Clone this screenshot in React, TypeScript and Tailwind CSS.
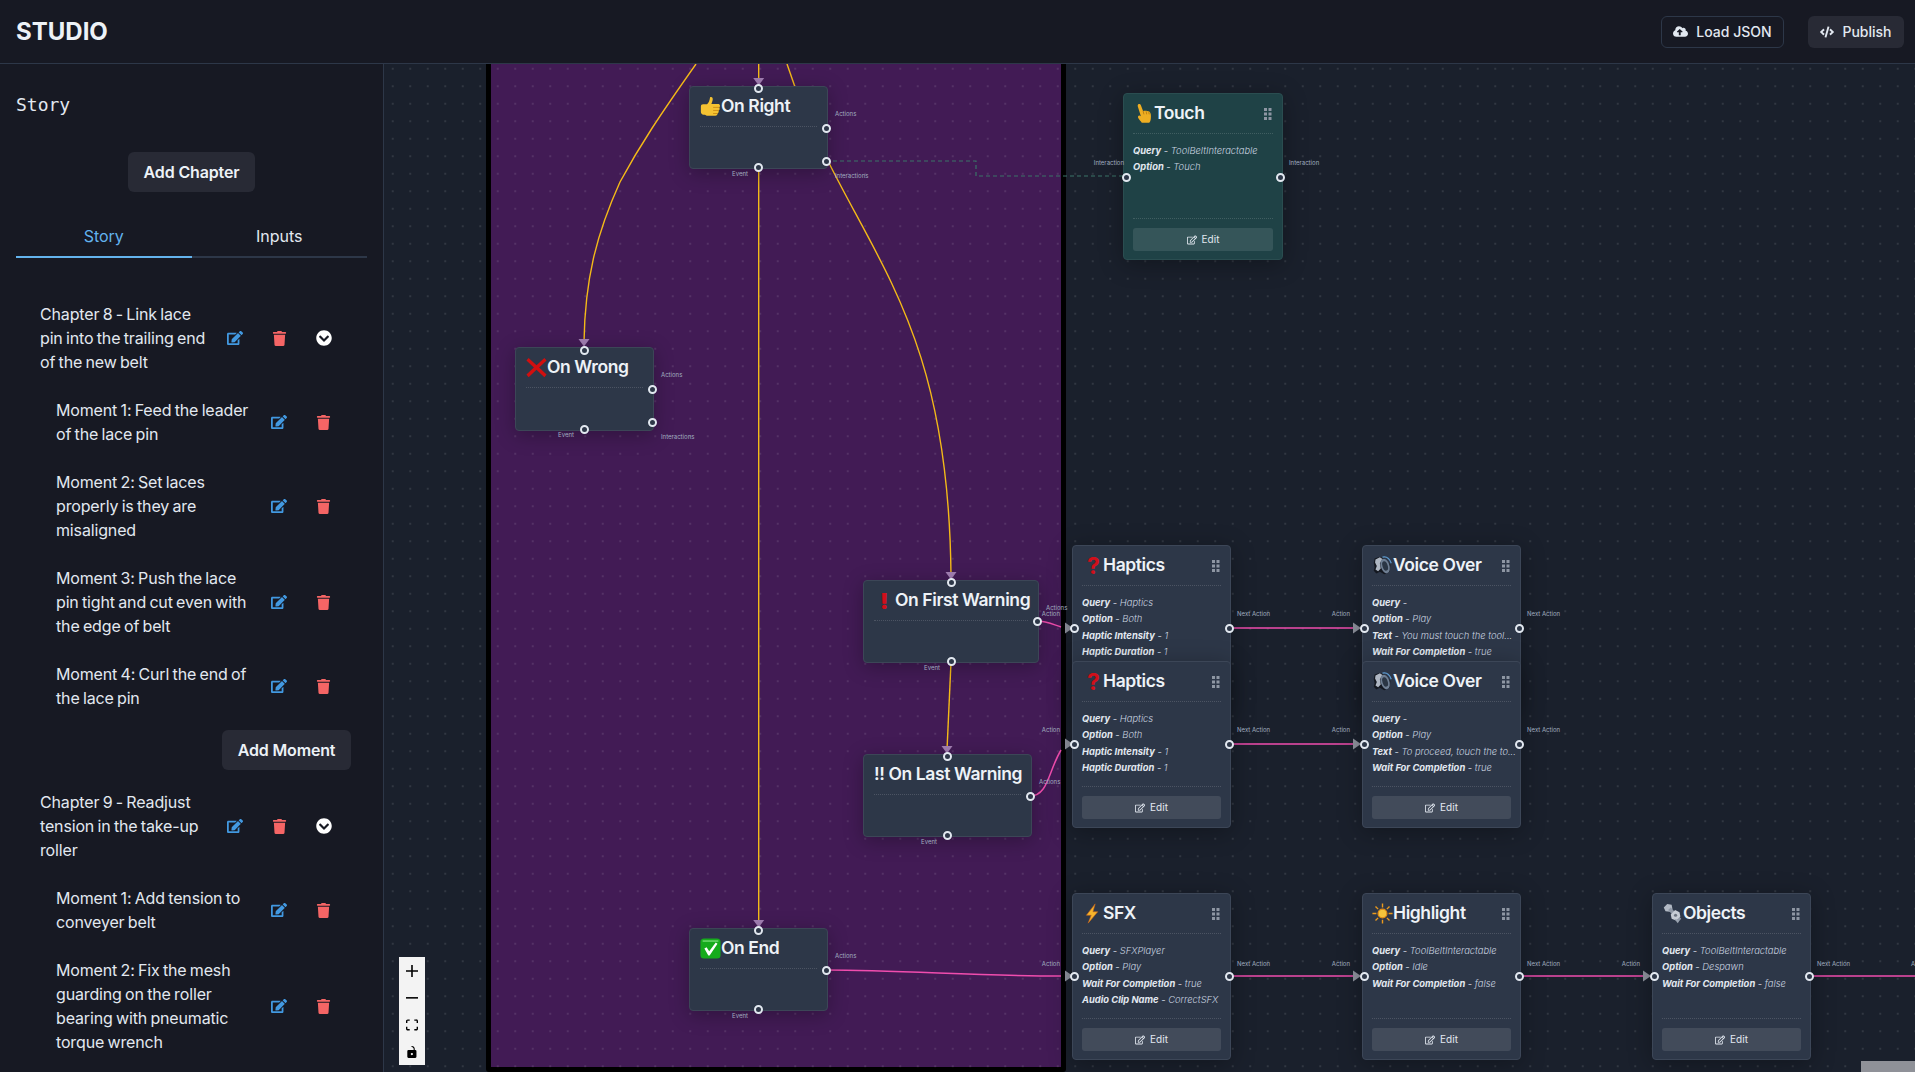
import { FaChevronCircleDown, FaCloudUploadAlt, FaCode, FaEdit, FaRegEdit, FaTrash } from 'react-icons/fa';

const X0 = 384;
const Y0 = 64;

const chapters = [
  {
    title: 'Chapter 8 - Link lace pin into the trailing end of the new belt',
    moments: [
      'Moment 1: Feed the leader of the lace pin',
      'Moment 2: Set laces properly is they are misaligned',
      'Moment 3: Push the lace pin tight and cut even with the edge of belt',
      'Moment 4: Curl the end of the lace pin',
    ],
    addMoment: true,
  },
  {
    title: 'Chapter 9 - Readjust tension in the take-up roller',
    moments: [
      'Moment 1: Add tension to conveyer belt',
      'Moment 2: Fix the mesh guarding on the roller bearing with pneumatic torque wrench',
    ],
    addMoment: false,
  },
];

function Thumb() {
  return (
    <svg viewBox="0 0 24 24" className="h-[21px] w-[21px] shrink-0">
      <path d="M1 12c0-1.500 1-2.500 2.500-2.500H8c2-2 3-4 3.500-8 2-1 3.500.5 3 3-.3 1.700-1 3-1.500 4.500h8c2 0 2.500 3 1 4 1 1.500.5 3-.8 3.500.5 1.500 0 3-1.200 3.300.2 1.700-.8 2.700-2.500 2.700H9c-1.500 0-2.500-.7-3.500-1.200H4c-1.800 0-3-1.300-3-3z" fill="#f5c332" />
      <path d="M15 13h7M15 16.500h6.500M15 20h5" stroke="#c98a12" strokeWidth="1" />
    </svg>
  );
}

function Cross() {
  return (
    <svg viewBox="0 0 24 24" className="h-[21px] w-[21px] shrink-0">
      <path d="M3 1l9 8.500L21 1l2.500 3-8.500 8 8.500 8-2.500 3-9-8.500L3 23 .5 20 9 12 .5 4z" fill="#d10f0f" />
    </svg>
  );
}

function Point() {
  return (
    <svg viewBox="0 0 24 24" className="h-[21px] w-[21px] shrink-0">
      <path d="M6 1.500c1.200-.8 2.500-.3 3 1l2.500 6.500c2-.5 5-.3 6.500.5 2 1 2.500 3 2.500 5.500 0 3.500-.5 6-2 7.500H10c-1-2-3-3.500-4-5.500-.8-1.500.2-3 2-2.500L9 15 5.500 4c-.3-1 0-2 .5-2.500z" fill="#eeae22" />
      <path d="M11.500 9l1 4M15 9.500l.7 3.500M18 10l.5 3" stroke="#b87a10" strokeWidth="1" />
    </svg>
  );
}

function Speaker() {
  return (
    <svg viewBox="0 0 24 24" className="h-[21px] w-[21px] shrink-0">
      <path d="M3 4l6-2 5 2 7 7-1 8-6 3-5-3-4 2-3-3 1-4-1-5z" fill="#141820" />
      <path d="M4 5l5-2.500 3 2-3 5 1 6-3 3-3-2 1.500-4-2-4z" fill="#aeb6c2" />
      <ellipse cx="15" cy="12.500" rx="5" ry="8.500" transform="rotate(-18 15 12.500)" fill="#6f7f93" />
      <ellipse cx="15" cy="12.500" rx="3" ry="5.500" transform="rotate(-18 15 12.500)" fill="#2b3644" />
      <path d="M12 2.500c4-1 8 1.500 10 7" stroke="#5d9bd0" strokeWidth="1.400" fill="none" />
    </svg>
  );
}

function Bolt() {
  return (
    <svg viewBox="0 0 24 24" className="h-[21px] w-[21px] shrink-0">
      <path d="M15 1L5 14h5.500L7 23l11-13h-5.500z" fill="#f6b52c" stroke="#c9651a" strokeWidth="0.700" />
    </svg>
  );
}

function Sun() {
  return (
    <svg viewBox="0 0 24 24" className="h-[21px] w-[21px] shrink-0">
      <circle cx="12" cy="12" r="5" fill="#f4c53c" stroke="#e28c17" strokeWidth="1.500" />
      <path d="M12 .5v4.500M12 19v4.500M.5 12H5M19 12h4.500M4 4l3 3M17 17l3 3M4 20l3-3M17 7l3-3" stroke="#ec9a1d" strokeWidth="1.600" />
    </svg>
  );
}

function NutBolt() {
  return (
    <svg viewBox="0 0 24 24" className="h-[21px] w-[21px] shrink-0">
      <path d="M2 5l4-4 5 1 1 5-3 3-5-.5z" fill="#b3bac5" />
      <path d="M7 8l3-3 12 13-3 3z" fill="#8f98a6" />
      <path d="M10 13l5-5 5 2.500 1 5-5 4.500-5-2z" fill="#c6ccd5" />
      <path d="M14 18l6 2-2 3z" fill="#9aa3b0" />
      <circle cx="15.500" cy="14" r="1.800" fill="#6b7380" />
    </svg>
  );
}

function Check() {
  return (
    <svg viewBox="0 0 24 24" className="h-[21px] w-[21px] shrink-0">
      <rect x="0.500" y="0.500" width="23" height="23" rx="4" fill="#16ab1c" />
      <path d="M3 2.500h18v2H3z" fill="#62d163" />
      <path d="M5 12l2.500-1.500 3 4.500L18 5l2 1.500L11 20h-1.500z" fill="#fff" />
    </svg>
  );
}

function Question() {
  return <span className="w-[21px] shrink-0 pl-[5px] text-[23px] leading-5 font-bold text-[#d10f1a]">?</span>;
}

function Bang() {
  return <span className="w-[21px] shrink-0 pl-[6px] text-[22px] leading-5 font-black text-[#d10f1a]">!</span>;
}

function Grip() {
  return (
    <svg viewBox="0 0 8 12" className="absolute right-[10px] top-[14px] h-3 w-2">
      {[0, 4.500, 9].map((y) => (
        <g key={y} fill="#8e96a3">
          <rect x="0" y={y} width="3" height="3" />
          <rect x="4.500" y={y} width="3" height="3" />
        </g>
      ))}
    </svg>
  );
}

function Handle({ x, y }: { x: number; y: number }) {
  return (
    <div
      className="absolute z-20 h-[9px] w-[9px] rounded-full border-2 border-[#e2e8f0] bg-[#2d3748]"
      style={{ left: x - X0 - 4.5, top: y - Y0 - 4.5 }}
    />
  );
}

function Label({ text, x, y, align = 'left' }: { text: string; x: number; y: number; align?: 'left' | 'right' | 'center' }) {
  const shift = align === 'left' ? '0' : align === 'right' ? '-100%' : '-50%';
  return (
    <span
      className="absolute z-20 text-[6px] leading-[8px] whitespace-nowrap text-[#a0aec0]"
      style={{ left: x - X0, top: y - Y0 - 4, transform: `translateX(${shift})` }}
    >
      {text}
    </span>
  );
}

function EventNode({ x, y, w, h, icon, title }: { x: number; y: number; w: number; h: number; icon?: React.ReactNode; title: string }) {
  return (
    <div
      className="absolute z-10 rounded-[4px] border border-[#3c4657] bg-[#2d3748] px-[10px] shadow-[0_4px_20px_rgba(0,0,0,0.28)]"
      style={{ left: x - X0, top: y - Y0, width: w, height: h }}
    >
      <div className="flex h-[39px] items-center whitespace-nowrap text-[17.500px] font-semibold tracking-[-0.4px] text-[#edf2f7]">
        {icon}
        {title}
      </div>
      <div className="border-t border-dotted border-white/15" />
    </div>
  );
}

function ActionNode({
  x,
  y,
  icon,
  title,
  props,
  touch,
}: {
  x: number;
  y: number;
  icon: React.ReactNode;
  title: string;
  props: [string, string][];
  touch?: boolean;
}) {
  return (
    <div
      className={`absolute z-10 flex h-[167px] flex-col rounded-[4px] border px-[9px] shadow-[0_4px_24px_rgba(0,0,0,0.3)] ${
        touch ? 'w-[160px] border-[#2a4d50] bg-[#1f4246]' : 'w-[159px] border-[#3c4657] bg-[#2d3748]'
      }`}
      style={{ left: x - X0, top: y - Y0 }}
    >
      <Grip />
      <div className="flex h-[39px] shrink-0 items-center whitespace-nowrap text-[17.500px] font-semibold tracking-[-0.4px] text-[#edf2f7]">
        {icon}
        {title}
      </div>
      <div className="border-t border-dotted border-white/15" />
      <div className="h-[84px] shrink-0 pt-[9px] text-[9.400px] leading-[16.300px] italic text-[#cbd5e0]">
        {props.map(([k, v]) => (
          <div key={k} className="whitespace-nowrap">
            <b className="font-bold text-[#e2e8f0]">{k}</b> - <span className="font-light">{v}</span>
          </div>
        ))}
      </div>
      <div className="border-t border-dotted border-white/15" />
      <button className="mt-[9px] flex h-[23px] shrink-0 items-center justify-center gap-[5px] rounded-[3px] bg-white/10 text-[10px] text-[#e2e8f0]">
        <FaRegEdit className="text-[10px]" />
        Edit
      </button>
    </div>
  );
}

function Canvas() {
  const p = (x: number, y: number) => `${x - X0} ${y - Y0}`;
  const yellow = '#f4ba18';
  const pink = '#f04dae';
  return (
    <main className="relative h-full flex-1 overflow-hidden bg-[#1a202c]">
      {/* group */}
      <div className="absolute left-[102px] top-[-20px] h-[1028px] w-[580px] rounded-[3px] border-[5px] border-black bg-[#421b55]" />
      <div className="absolute inset-0 bg-[radial-gradient(circle,rgba(255,255,255,0.1)_0.7px,transparent_0.8px)] bg-[length:17.5px_17.5px] bg-[position:0px_-4px]" />

      {/* edges */}
      <svg className="absolute inset-0 h-full w-full" fill="none">
        <g stroke={yellow} strokeWidth="1.400">
          <path d={`M${p(758.7, 64)}V${84 - Y0}`} />
          <path d={`M${p(696, 64)}C${p(660, 115)} ${p(640, 145)} ${p(620, 182)}C${p(596, 235)} ${p(585, 280)} ${p(584, 342)}`} />
          <path d={`M${p(787, 64)}L${p(795, 87)}`} />
          <path d={`M${p(829, 163)}C${p(885, 275)} ${p(949, 350)} ${p(951, 576)}`} />
          <path d={`M${p(758.7, 168)}V${924 - Y0}`} />
          <path d={`M${p(951, 662)}L${p(947, 750)}`} />
        </g>
        <g stroke={pink} strokeWidth="1.500">
          <path d={`M${p(1037, 621)}C${p(1046, 621)} ${p(1052, 624)} ${p(1061, 627)}`} />
          <path d={`M${p(1030, 796)}C${p(1048, 796)} ${p(1048, 772)} ${p(1061, 750)}`} />
          <path d={`M${p(826, 970)}C${p(900, 970)} ${p(980, 976)} ${p(1061, 976)}`} />
          <path d={`M${p(1229, 628)}H${1356 - X0}`} />
          <path d={`M${p(1229, 744)}H${1356 - X0}`} />
          <path d={`M${p(1229, 976)}H${1356 - X0}`} />
          <path d={`M${p(1519, 976)}H${1646 - X0}`} />
          <path d={`M${p(1809, 976)}H${1915 - X0}`} />
        </g>
        <path d={`M${p(826, 161)}H${976 - X0}V${176 - Y0}H${1125 - X0}`} stroke="#3a7468" strokeWidth="1.200" strokeDasharray="4 3" />
        <g fill="#a37fb4">
          {[
            [758.7, 78],
            [584, 339],
            [951, 572],
            [947, 746],
            [758.7, 920],
          ].map(([x, y]) => (
            <path key={x + '-' + y} d={`M${p(x - 5.5, y)}H${x + 5.5 - X0}L${p(x, y + 7.5)}Z`} />
          ))}
        </g>
        <g fill="#8f939e">
          {[
            [1065, 628],
            [1353, 628],
            [1065, 744],
            [1353, 744],
            [1065, 976],
            [1353, 976],
            [1643, 976],
          ].map(([x, y]) => (
            <path key={x + '-' + y} d={`M${p(x, y - 5.5)}L${p(x + 8, y)}L${p(x, y + 5.5)}Z`} />
          ))}
        </g>
      </svg>

      {/* story nodes */}
      <EventNode x={689} y={86} w={139} h={83} icon={<Thumb />} title="On Right" />
      <EventNode x={515} y={347} w={139} h={84} icon={<Cross />} title="On Wrong" />
      <EventNode x={863} y={580} w={176} h={83} icon={<Bang />} title="On First Warning" />
      <EventNode x={863} y={754} w={169} h={83} title="!! On Last Warning" />
      <EventNode x={689} y={928} w={139} h={83} icon={<Check />} title="On End" />

      <ActionNode x={1123} y={93} touch icon={<Point />} title="Touch" props={[['Query', 'ToolBeltInteractable'], ['Option', 'Touch']]} />
      <ActionNode
        x={1072}
        y={545}
        icon={<Question />}
        title="Haptics"
        props={[['Query', 'Haptics'], ['Option', 'Both'], ['Haptic Intensity', '1'], ['Haptic Duration', '1']]}
      />
      <ActionNode
        x={1362}
        y={545}
        icon={<Speaker />}
        title="Voice Over"
        props={[['Query', ''], ['Option', 'Play'], ['Text', 'You must touch the tool...'], ['Wait For Completion', 'true']]}
      />
      <ActionNode
        x={1072}
        y={661}
        icon={<Question />}
        title="Haptics"
        props={[['Query', 'Haptics'], ['Option', 'Both'], ['Haptic Intensity', '1'], ['Haptic Duration', '1']]}
      />
      <ActionNode
        x={1362}
        y={661}
        icon={<Speaker />}
        title="Voice Over"
        props={[['Query', ''], ['Option', 'Play'], ['Text', 'To proceed, touch the to...'], ['Wait For Completion', 'true']]}
      />
      <ActionNode
        x={1072}
        y={893}
        icon={<Bolt />}
        title="SFX"
        props={[['Query', 'SFXPlayer'], ['Option', 'Play'], ['Wait For Completion', 'true'], ['Audio Clip Name', 'CorrectSFX']]}
      />
      <ActionNode
        x={1362}
        y={893}
        icon={<Sun />}
        title="Highlight"
        props={[['Query', 'ToolBeltInteractable'], ['Option', 'Idle'], ['Wait For Completion', 'false']]}
      />
      <ActionNode
        x={1652}
        y={893}
        icon={<NutBolt />}
        title="Objects"
        props={[['Query', 'ToolBeltInteractable'], ['Option', 'Despawn'], ['Wait For Completion', 'false']]}
      />

      {/* handles */}
      {[
        [758.7, 88], [826, 128], [826, 161], [758.7, 167.500],
        [584, 350], [652, 389], [652, 422], [584, 429],
        [951, 582], [1037, 621], [951, 661],
        [947, 756], [1030, 796], [947, 835],
        [758.7, 930], [826, 970], [758.7, 1009],
        [1126, 177], [1280, 177],
        [1074, 628], [1229, 628], [1364, 628], [1519, 628],
        [1074, 744], [1229, 744], [1364, 744], [1519, 744],
        [1074, 976], [1229, 976], [1364, 976], [1519, 976], [1654, 976], [1809, 976],
      ].map(([x, y]) => (
        <Handle key={x + '-' + y} x={x} y={y} />
      ))}

      {/* handle labels */}
      <Label text="Actions" x={835} y={114} />
      <Label text="Interactions" x={835} y={176} />
      <Label text="Event" x={740} y={174} align="center" />
      <Label text="Actions" x={661} y={375} />
      <Label text="Interactions" x={661} y={437} />
      <Label text="Event" x={566} y={435} align="center" />
      <Label text="Actions" x={1046} y={608} />
      <Label text="Event" x={932} y={668} align="center" />
      <Label text="Actions" x={1039} y={782} />
      <Label text="Event" x={929} y={842} align="center" />
      <Label text="Actions" x={835} y={956} />
      <Label text="Event" x={740} y={1016} align="center" />
      <Label text="Interaction" x={1124} y={163} align="right" />
      <Label text="Interaction" x={1289} y={163} />
      {[614, 730, 964].map((y) => (
        <Label key={y} text="Action" x={1060} y={y} align="right" />
      ))}
      {[614, 730, 964].map((y) => (
        <Label key={y} text="Next Action" x={1237} y={y} />
      ))}
      {[614, 730, 964].map((y) => (
        <Label key={y} text="Action" x={1350} y={y} align="right" />
      ))}
      {[614, 730, 964].map((y) => (
        <Label key={y} text="Next Action" x={1527} y={y} />
      ))}
      <Label text="Action" x={1640} y={964} align="right" />
      <Label text="Next Action" x={1817} y={964} />
      <Label text="Action" x={1911} y={964} />

      {/* zoom controls */}
      <div className="absolute bottom-[7px] left-[15px] z-30 flex w-[26px] flex-col bg-[#f3f3f3]">
        <button className="flex h-[27px] items-center justify-center">
          <svg viewBox="0 0 32 32" className="h-3 w-3"><path d="M32 18.133H18.133V32h-4.266V18.133H0v-4.266h13.867V0h4.266v13.867H32z" /></svg>
        </button>
        <button className="flex h-[27px] items-center justify-center">
          <svg viewBox="0 0 32 5" className="h-[2px] w-3"><path d="M0 0h32v4.200H0z" /></svg>
        </button>
        <button className="flex h-[27px] items-center justify-center">
          <svg viewBox="0 0 32 30" className="h-3 w-3"><path d="M3.692 4.630c0-.530.400-.938.939-.938h5.215V0H4.708C2.130 0 0 2.054 0 4.630v5.216h3.692V4.631zM27.354 0h-5.200v3.692h5.170c.530 0 .984.400.984.939v5.215H32V4.631A4.624 4.624 0 0027.354 0zm.954 24.830c0 .532-.400.940-.939.940h-5.215v3.768h5.215c2.577 0 4.631-2.130 4.631-4.707v-5.139h-3.692v5.139zm-23.677.940c-.531 0-.939-.400-.939-.940v-5.138H0v5.139c0 2.577 2.130 4.707 4.708 4.707h5.138V25.770H4.631z" /></svg>
        </button>
        <button className="flex h-[27px] items-center justify-center">
          <svg viewBox="0 0 25 32" className="h-3 w-3"><path d="M21.333 10.667H19.810V7.619C19.810 3.429 16.380 0 12.190 0c-4.114 1.828-1.370 2.133.305 2.438 1.676.305 4.420 2.590 4.420 5.181v3.048H3.047A3.056 3.056 0 000 13.714v15.238A3.056 3.056 0 003.048 32h18.285a3.056 3.056 0 003.048-3.048V13.714a3.056 3.056 0 00-3.048-3.047zM12.190 24.533a3.056 3.056 0 01-3.047-3.047 3.056 3.056 0 013.047-3.048 3.056 3.056 0 013.048 3.048 3.056 3.056 0 01-3.048 3.047z" /></svg>
        </button>
      </div>

      {/* minimap corner */}
      <div className="absolute bottom-0 right-0 z-30 h-[11px] w-[54px] bg-[#8f9198]" />
    </main>
  );
}

function IconCell({ children }: { children: React.ReactNode }) {
  return <div className="flex w-[44.500px] shrink-0 justify-center">{children}</div>;
}

function Sidebar() {
  return (
    <aside className="h-full w-[384px] shrink-0 overflow-hidden border-r border-[#2d3748] bg-[#171923] px-4">
      <h2 className="mt-[29px] font-['DejaVu_Sans_Mono',monospace] text-[18px] leading-6 text-[#e2e8f0]">Story</h2>
      <div className="mt-[35px] flex justify-center">
        <button className="h-10 w-[127px] rounded-md bg-[#282a35] text-base font-semibold tracking-[-0.15px] text-[#edf2f7]">Add Chapter</button>
      </div>

      <div className="mt-6 flex h-[42px] border-b-2 border-[#2d3748]">
        <div className="-mb-[2px] flex w-1/2 items-center justify-center border-b-2 border-[#63b3ed] text-base text-[#63b3ed]">Story</div>
        <div className="flex w-1/2 items-center justify-center text-base text-[#e2e8f0]">Inputs</div>
      </div>

      <div className="mt-8 text-base leading-6 tracking-[-0.15px] text-[#e2e8f0] [word-spacing:-1px]">
        {chapters.map((c) => (
          <div key={c.title}>
            <div className="flex items-center py-3 pl-6">
              <div className="w-[173px] shrink-0">{c.title}</div>
              <IconCell><FaEdit className="text-[16px] text-[#4299e1]" /></IconCell>
              <IconCell><FaTrash className="text-[15px] text-[#f56565]" /></IconCell>
              <IconCell><FaChevronCircleDown className="text-[16px] text-white" /></IconCell>
            </div>
            {c.moments.map((m) => (
              <div key={m} className="flex items-center py-3 pl-10">
                <div className="w-[201px] shrink-0">{m}</div>
                <IconCell><FaEdit className="text-[16px] text-[#4299e1]" /></IconCell>
                <IconCell><FaTrash className="text-[15px] text-[#f56565]" /></IconCell>
              </div>
            ))}
            {c.addMoment && (
              <div className="my-2 pl-[206px]">
                <button className="h-10 w-[129px] rounded-md bg-[#282a35] font-semibold text-[#edf2f7] [word-spacing:0]">Add Moment</button>
              </div>
            )}
          </div>
        ))}
      </div>
    </aside>
  );
}

export default function App() {
  return (
    <div className="flex h-screen w-screen flex-col overflow-hidden bg-[#171923] font-['Inter',sans-serif]">
      <header className="flex h-16 shrink-0 items-center justify-between border-b border-[#2d3748] pl-4 pr-[11px]">
        <h1 className="text-2xl font-bold text-[#edf2f7]">STUDIO</h1>
        <div className="flex gap-6">
          <button className="flex h-8 w-[123px] items-center justify-center gap-2 rounded-md border border-[#2d3748] text-sm font-medium text-[#e2e8f0]">
            <FaCloudUploadAlt className="text-[15px]" />
            Load JSON
          </button>
          <button className="flex h-8 w-[96px] items-center justify-center gap-2 rounded-md bg-[#282a35] text-sm font-medium text-[#e2e8f0]">
            <FaCode className="text-[14px]" />
            Publish
          </button>
        </div>
      </header>
      <div className="flex min-h-0 flex-1">
        <Sidebar />
        <Canvas />
      </div>
    </div>
  );
}
